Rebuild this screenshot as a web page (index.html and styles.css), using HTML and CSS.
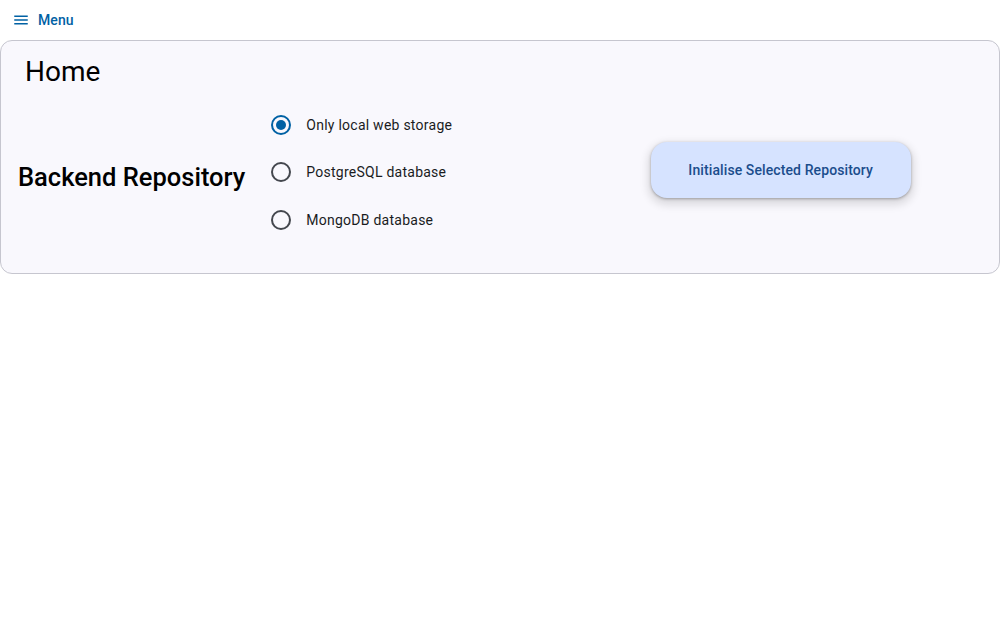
FILE: index.html
```html
<!DOCTYPE html>
<html lang="en">
<head>
<meta charset="utf-8">
<title>Home</title>
<link rel="stylesheet" href="styles.css">
</head>
<body>
<div class="topbar">
  <button class="menu-btn" type="button">
    <svg class="menu-icon" viewBox="0 0 24 24" width="18" height="18" aria-hidden="true">
      <path d="M3 18h18v-2H3v2zm0-5h18v-2H3v2zm0-7v2h18V6H3z" fill="currentColor"/>
    </svg>
    <span>Menu</span>
  </button>
</div>
<main class="card">
  <h1 class="title">Home</h1>
  <div class="row">
    <h2 class="label">Backend Repository</h2>
    <div class="radios">
      <label class="radio-row">
        <span class="radio checked"></span>
        <span class="radio-text">Only local web storage</span>
      </label>
      <label class="radio-row">
        <span class="radio"></span>
        <span class="radio-text">PostgreSQL database</span>
      </label>
      <label class="radio-row">
        <span class="radio"></span>
        <span class="radio-text">MongoDB database</span>
      </label>
    </div>
    <div class="action">
      <button class="init-btn" type="button">Initialise Selected Repository</button>
    </div>
  </div>
</main>
</body>
</html>
```

FILE: styles.css
```css
* { box-sizing: border-box; }
html, body { margin: 0; padding: 0; background: #ffffff; }
body {
  font-family: Roboto, "Noto Sans", "Liberation Sans", sans-serif;
  color: #1a1c1e;
}
.topbar {
  height: 40px;
  display: flex;
  align-items: center;
  padding-left: 12px;
}
.menu-btn {
  display: flex;
  align-items: center;
  gap: 8px;
  border: none;
  background: none;
  padding: 0;
  font-family: inherit;
  font-size: 14px;
  font-weight: 500;
  letter-spacing: 0.1px;
  color: #0061a4;
  cursor: pointer;
}
.menu-icon { display: block; }
.card {
  margin: 0;
  border: 1px solid #c6c6cf;
  border-radius: 12px;
  background: #f9f8fd;
  padding: 13px 17px 29px 17px;
}
.title {
  margin: 0 0 0 7px;
  font-size: 28px;
  line-height: 36px;
  font-weight: 400;
  color: #000;
}
.row {
  display: flex;
  align-items: center;
  gap: 26px;
  margin-top: 11px;
}
.label {
  margin: 0;
  padding-top: 10px;
  font-size: 25.5px;
  line-height: 32px;
  font-weight: 500;
  color: #000;
  white-space: nowrap;
}
.radios {
  width: 282px;
  display: flex;
  flex-direction: column;
}
.radio-row {
  display: flex;
  align-items: center;
  gap: 15px;
  height: 47.5px;
  font-size: 14px;
  letter-spacing: 0.25px;
  color: #1a1c1e;
}
.radio {
  width: 20px;
  height: 20px;
  border: 2px solid #44474e;
  border-radius: 50%;
  display: flex;
  align-items: center;
  justify-content: center;
  flex: none;
}
.radio.checked { border-color: #0061a4; }
.radio.checked::after {
  content: "";
  width: 10px;
  height: 10px;
  border-radius: 50%;
  background: #0061a4;
}
.action {
  flex: 1;
  display: flex;
  justify-content: center;
  padding-bottom: 5px;
}
.init-btn {
  width: 260px;
  height: 56px;
  border: none;
  border-radius: 16px;
  background: #d6e3ff;
  color: #1b4d8c;
  font-family: inherit;
  font-size: 14px;
  font-weight: 500;
  letter-spacing: 0.1px;
  box-shadow: 0 4px 8px 3px rgba(0,0,0,0.12), 0 1px 3px rgba(0,0,0,0.3);
  cursor: pointer;
}
```
